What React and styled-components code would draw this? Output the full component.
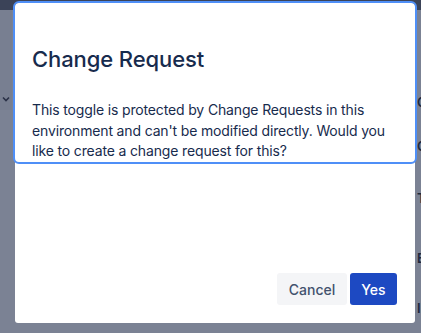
import React from 'react';
import styled, { createGlobalStyle } from 'styled-components';

const Global = createGlobalStyle`
  html, body {
    margin: 0;
    padding: 0;
    height: 100%;
    overflow: hidden;
  }
  body {
    background: #7b8294;
    font-family: Inter, "Noto Sans", "Liberation Sans", sans-serif;
  }
`;

const Page = styled.div`
  width: 421px;
  height: 333px;
  display: flex;
  flex-direction: column;
  background: #7b8294;
`;

const TopBar = styled.div`
  height: 10px;
  background: #3b4358;
`;

const Body = styled.div`
  flex: 1;
  display: grid;
  grid-template-columns: 12px 1fr 4px;
`;

const SideCol = styled.div`
  display: flex;
  flex-direction: column;
`;

const SidePanel = styled.div`
  height: 100px;
  background: #787f91;
  display: flex;
  align-items: flex-end;
  justify-content: center;
  padding-bottom: 8px;
  box-sizing: border-box;
  color: #2a3147;
`;

const EdgeCol = styled.div`
  display: flex;
  flex-direction: column;
  font-size: 13px;
  font-weight: 600;
  color: #20283c;
  overflow: hidden;
  white-space: nowrap;
`;

const EdgeItem = styled.div`
  height: ${p => p.$h}px;
  display: flex;
  align-items: center;
`;

const Overlay = styled.div`
  position: fixed;
  inset: 0;
`;

const Dialog = styled.div`
  position: absolute;
  left: 15px;
  top: 3px;
  width: 400px;
  height: 320px;
  background: #ffffff;
  border-radius: 3px;
  display: flex;
  flex-direction: column;
`;

const Content = styled.section`
  height: 159px;
  padding: 42px 16px 0 17px;
  box-sizing: border-box;
  border-radius: 4px;
  outline: 2px solid #4f8ff7;
`;

const Title = styled.h1`
  margin: 0;
  font-size: 22px;
  line-height: 28px;
  font-weight: 500;
  color: #172b4d;
  letter-spacing: -0.1px;
`;

const Text = styled.p`
  margin: 27px 0 0;
  font-size: 14px;
  line-height: 20.5px;
  letter-spacing: -0.15px;
  color: #172b4d;
`;

const Footer = styled.div`
  margin-top: auto;
  display: flex;
  justify-content: flex-end;
  gap: 3px;
  padding: 0 18px 18px 0;
`;

const Button = styled.button`
  width: ${p => (p.$primary ? 47 : 70)}px;
  height: 32px;
  padding: 0;
  border: none;
  border-radius: 3px;
  font-family: inherit;
  font-size: 14px;
  font-weight: 500;
  background: ${p => (p.$primary ? '#1d49c2' : '#f4f5f7')};
  color: ${p => (p.$primary ? '#ffffff' : '#42526e')};
  cursor: pointer;
`;

const Chevron = () => (
  <svg width="8" height="6" viewBox="0 0 8 6">
    <path d="M1 1.5 L4 4.5 L7 1.5" fill="none" stroke="currentColor" strokeWidth="1.6" />
  </svg>
);

export default function App() {
  return (
    <>
      <Global />
      <Page>
        <TopBar />
        <Body>
          <SideCol>
            <SidePanel>
              <Chevron />
            </SidePanel>
          </SideCol>
          <div />
          <EdgeCol>
            <EdgeItem $h={70} />
            <EdgeItem $h={44}>C</EdgeItem>
            <EdgeItem $h={44}>C</EdgeItem>
            <EdgeItem $h={60}>T</EdgeItem>
            <EdgeItem $h={60}>E</EdgeItem>
            <EdgeItem $h={40}>I</EdgeItem>
          </EdgeCol>
        </Body>
      </Page>
      <Overlay>
        <Dialog role="dialog">
          <Content>
            <Title>Change Request</Title>
            <Text>
              This toggle is protected by Change Requests in this environment and can't be modified
              directly. Would you like to create a change request for this?
            </Text>
          </Content>
          <Footer>
            <Button>Cancel</Button>
            <Button $primary>Yes</Button>
          </Footer>
        </Dialog>
      </Overlay>
    </>
  );
}
